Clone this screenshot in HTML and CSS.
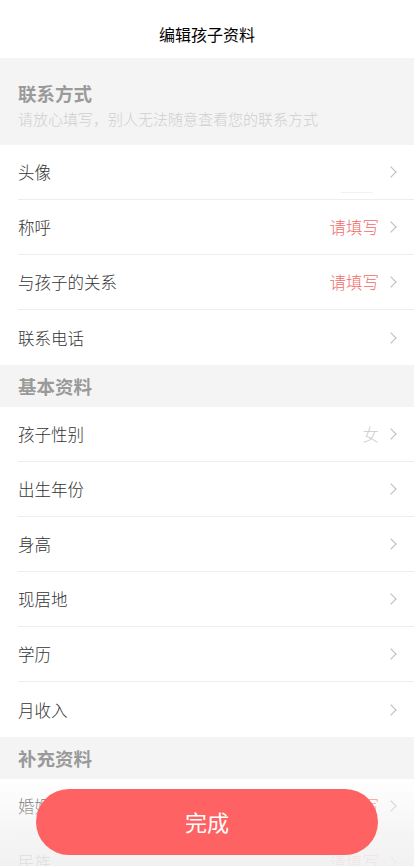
FILE: index.html
```html
<!DOCTYPE html>
<html lang="zh-CN">
<head>
  <meta charset="UTF-8">
  <meta name="viewport" content="width=device-width, initial-scale=1.0">
  <title>编辑孩子资料</title>
  <link rel="stylesheet" href="styles.css">
</head>
<body>
  <header class="topbar">编辑孩子资料</header>

  <div class="section-head tall">
    <div class="section-title">联系方式</div>
    <div class="section-tip">请放心填写，别人无法随意查看您的联系方式</div>
  </div>
  <ul class="list">
    <li class="row"><span class="label">头像</span><span class="value"><span class="avatar"></span><i class="arrow"></i></span></li>
    <li class="row"><span class="label">称呼</span><span class="value red">请填写<i class="arrow"></i></span></li>
    <li class="row"><span class="label">与孩子的关系</span><span class="value red">请填写<i class="arrow"></i></span></li>
    <li class="row"><span class="label">联系电话</span><span class="value"><i class="arrow"></i></span></li>
  </ul>

  <div class="section-head"><div class="section-title">基本资料</div></div>
  <ul class="list">
    <li class="row"><span class="label">孩子性别</span><span class="value light">女<i class="arrow"></i></span></li>
    <li class="row"><span class="label">出生年份</span><span class="value"><i class="arrow"></i></span></li>
    <li class="row"><span class="label">身高</span><span class="value"><i class="arrow"></i></span></li>
    <li class="row"><span class="label">现居地</span><span class="value"><i class="arrow"></i></span></li>
    <li class="row"><span class="label">学历</span><span class="value"><i class="arrow"></i></span></li>
    <li class="row"><span class="label">月收入</span><span class="value"><i class="arrow"></i></span></li>
  </ul>

  <div class="section-head"><div class="section-title">补充资料</div></div>
  <ul class="list">
    <li class="row"><span class="label">婚姻状况</span><span class="value red">请填写<i class="arrow"></i></span></li>
    <li class="row"><span class="label">民族</span><span class="value red">请填写<i class="arrow"></i></span></li>
  </ul>

  <div class="footer">
    <button class="done-btn">完成</button>
  </div>
</body>
</html>
```

FILE: styles.css
```css
body {
  margin: 0;
  font-family: "Noto Sans CJK SC", "Noto Sans", sans-serif;
  background-color: #fff;
  color: #333;
}
.topbar {
  height: 58px;
  line-height: 68px;
  text-align: center;
  font-size: 16px;
  color: #000;
  background-color: #fff;
}
.section-head {
  height: 42px;
  padding: 0 18px;
  display: flex;
  flex-direction: column;
  justify-content: center;
  background-color: #f4f4f4;
}
.section-head.tall {
  height: 87px;
  padding-top: 9px;
  box-sizing: border-box;
}
.section-title {
  font-size: 18.5px;
  font-weight: bold;
  color: #9a9a9a;
  line-height: 26px;
}
.section-tip {
  font-size: 15px;
  font-weight: 300;
  color: #cfcfcf;
  line-height: 26px;
}
.list {
  list-style: none;
  margin: 0;
  padding: 0 0 0 18px;
}
.row {
  height: 55px;
  display: flex;
  align-items: center;
  justify-content: space-between;
  padding-right: 16px;
  border-bottom: 1px solid #eeeeee;
  box-sizing: border-box;
  font-size: 16.5px;
  font-weight: 300;
}
.row:last-child {
  border-bottom: none;
}
.label {
  color: #333;
}
.value {
  display: flex;
  align-items: center;
  color: #333;
}
.value.red {
  color: #f26a6a;
}
.value.light {
  color: #cccccc;
}
.avatar {
  width: 32px;
  height: 26px;
  margin-top: 14px;
  margin-right: 6px;
  border-bottom: 1px solid #f2f2f2;
}
.arrow {
  width: 7px;
  height: 7px;
  margin-left: 8px;
  margin-right: 3px;
  border-top: 1px solid #bbb;
  border-right: 1px solid #bbb;
  transform: rotate(45deg);
}
.footer {
  position: fixed;
  left: 0;
  right: 0;
  bottom: 0;
  height: 88px;
  display: flex;
  justify-content: center;
  padding-top: 11px;
  box-sizing: border-box;
  background: linear-gradient(to bottom, rgba(255, 255, 255, 0), rgba(244, 244, 244, 0.85) 60%, rgba(240, 240, 240, 0.9));
}
.done-btn {
  width: 342px;
  height: 66px;
  padding-bottom: 4px;
  border: none;
  border-radius: 33px;
  background-color: #ff6262;
  color: #fff;
  font-family: inherit;
  font-size: 22px;
  cursor: pointer;
}
```
